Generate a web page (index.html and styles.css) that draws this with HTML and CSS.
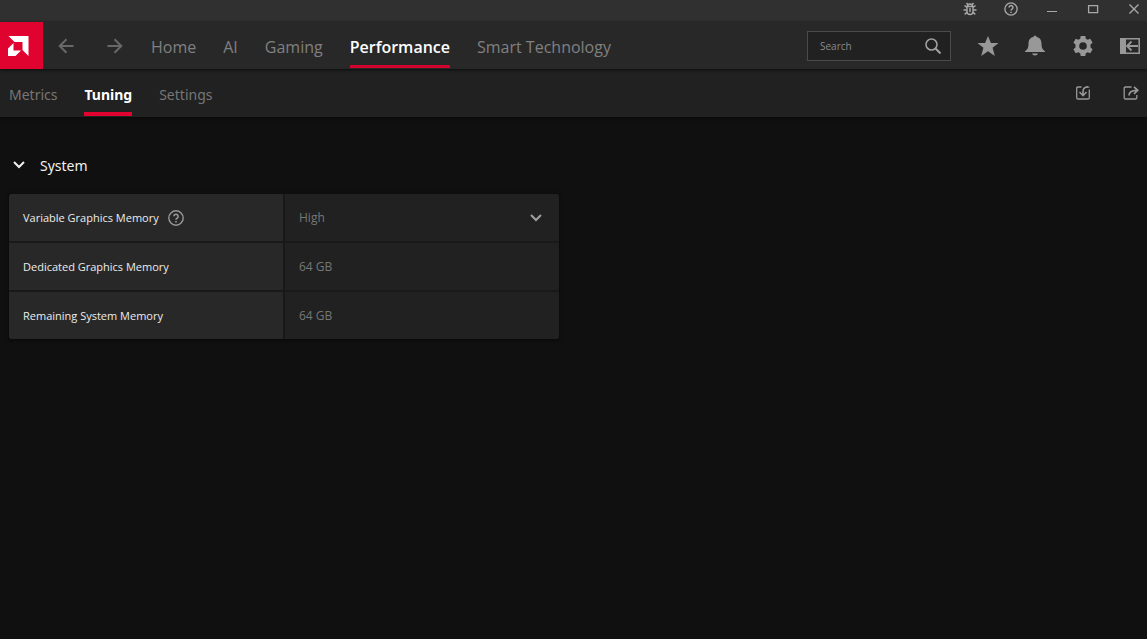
FILE: index.html
```html
<!DOCTYPE html>
<html lang="en">
<head>
<meta charset="utf-8">
<title>Performance Tuning</title>
<meta name="viewport" content="width=device-width, initial-scale=1">
<link rel="stylesheet" href="styles.css">
</head>
<body>
<div class="titlebar">
  <button class="icon-btn" aria-label="Report a bug"><svg width="14" height="14" viewBox="0 0 14 14" fill="none" stroke="currentColor" stroke-width="1.400"><path d="M4 4.500h6v5a3 3 0 0 1-6 0zM4.500 4.500a2.500 2.500 0 0 1 5 0M4.700 2.500 3.500 1M9.300 2.500 10.500 1M4 5.500 1.500 3.500M10 5.500l2.500-2M4 8H.5M10 8h3.500M4 10l-2.300 2.500M10 10l2.300 2.500M7 6v4"/></svg></button>
  <button class="icon-btn" aria-label="Help"><svg width="14" height="14" viewBox="0 0 16 16" fill="none" stroke="currentColor" stroke-width="1.500"><circle cx="8" cy="8" r="7"/><path d="M5.800 6.300a2.200 2.200 0 1 1 3.400 1.800Q8 8.900 8 9.800M8 11v1.600" stroke-width="1.700"/></svg></button>
  <button class="icon-btn" aria-label="Minimize"><svg width="14" height="14" viewBox="0 0 14 14" fill="none" stroke="currentColor"><path d="M2 9.500h10"/></svg></button>
  <button class="icon-btn" aria-label="Maximize"><svg width="14" height="14" viewBox="0 0 14 14" fill="none" stroke="currentColor" stroke-width="1.300"><path d="M2.600 3.600h9v7h-9z"/></svg></button>
  <button class="icon-btn" aria-label="Close"><svg width="14" height="14" viewBox="0 0 14 14" fill="none" stroke="currentColor" stroke-width="1.400"><path d="m2.500 2.500 9 9m0-9-9 9"/></svg></button>
</div>
<header class="mainbar">
  <a class="logo" href="#" aria-label="AMD"><svg width="22" height="22" viewBox="0 0 22 22" fill="#fff"><path d="M1.500 1h20v20l-6-6V7h-8zM6.500 8v7.500h7.500L8.500 21H1v-7.500z"/></svg></a>
  <div class="history">
    <button class="icon-btn" aria-label="Back"><svg width="16" height="16" viewBox="0 0 16 16" fill="none" stroke="currentColor" stroke-width="2"><path d="M15.500 8H2M8.500 1.200 1.700 8l6.800 6.800"/></svg></button>
    <button class="icon-btn" aria-label="Forward"><svg width="16" height="16" viewBox="0 0 16 16" fill="none" stroke="currentColor" stroke-width="2"><path d="M.5 8H14M7.500 1.200 14.300 8l-6.800 6.800"/></svg></button>
  </div>
  <nav class="tabs" aria-label="Main">
    <a class="tab" href="#">Home</a>
    <a class="tab" href="#">AI</a>
    <a class="tab" href="#">Gaming</a>
    <a class="tab active" href="#" aria-current="page">Performance</a>
    <a class="tab" href="#">Smart Technology</a>
  </nav>
  <label class="search">
    <input type="search" placeholder="Search" aria-label="Search">
    <svg width="16" height="16" viewBox="0 0 16 16" fill="none" stroke="currentColor" stroke-width="1.600"><circle cx="6.500" cy="6.500" r="5.500"/><path d="m10.500 10.500 5 5" stroke-width="2"/></svg>
  </label>
  <div class="tools">
    <button class="icon-btn" aria-label="Favorites"><svg width="22" height="22" viewBox="0 0 22 22" fill="currentColor"><path d="m11 1 2.900 7H21.500l-5.900 4.800L17.800 21 11 16.300 4.200 21l2.200-8.200L.5 8h7.600z"/></svg></button>
    <button class="icon-btn" aria-label="Notifications"><svg width="22" height="22" viewBox="0 0 22 22" fill="currentColor"><path d="M9.500 2a1.500 1.500 0 0 1 3 0c3.500.7 5 3.300 5 6.500 0 4 .8 5.800 3.500 7.700v.8H1v-.8c2.700-1.900 3.500-3.700 3.500-7.700 0-3.200 1.500-5.800 5-6.500zM8 18.500h6c-.5 1.300-1.500 2-3 2s-2.500-.7-3-2z"/></svg></button>
    <button class="icon-btn" aria-label="Settings"><svg width="24" height="24" viewBox="0 0 24 24" fill="currentColor"><path fill-rule="evenodd" d="m9.700 2-.5 2.700-1.900 1.100-2.600-1L2.400 8.700l2.100 1.800v3l-2.100 1.800 2.300 3.900 2.600-1 1.900 1.100.5 2.700h4.600l.5-2.700 1.900-1.100 2.600 1 2.300-3.900-2.100-1.800v-3l2.100-1.800-2.300-3.900-2.600 1-1.900-1.100-.5-2.700zM12 8.200a3.800 3.800 0 1 1 0 7.600 3.800 3.800 0 0 1 0-7.600z"/></svg></button>
    <button class="icon-btn" aria-label="Dock window"><svg width="20" height="16" viewBox="0 0 20 16" fill="none" stroke="currentColor" stroke-width="1.500"><path d="M.8.800h18.400v14.400H.8z"/><path d="M0 0h6v16H0z" fill="currentColor" stroke="none"/><path d="M18 8H7.500M11.500 3.500 7 8l4.500 4.500" stroke-width="1.800"/></svg></button>
  </div>
</header>
<div class="subbar">
  <nav class="subtabs" aria-label="Performance">
    <a class="subtab" href="#">Metrics</a>
    <a class="subtab active" href="#" aria-current="page">Tuning</a>
    <a class="subtab" href="#">Settings</a>
  </nav>
  <div class="tools">
    <button class="icon-btn" aria-label="Import profile"><svg width="16" height="16" viewBox="0 0 16 16" fill="none" stroke="currentColor" stroke-width="1.300"><path d="M6.500 2H3Q1.700 2 1.700 3.300v9.400Q1.700 14 3 14h10q1.300 0 1.300-1.300V4.500M11 2.200h3.300"/><path d="M13 1.700Q8 2 8 6.500V10M4.500 7 8 10.500 11.500 7" stroke-width="1.600"/></svg></button>
    <button class="icon-btn" aria-label="Export profile"><svg width="16" height="16" viewBox="0 0 16 16" fill="none" stroke="currentColor" stroke-width="1.300"><path d="M8.500 2H2.500Q1.200 2 1.200 3.300v9.400Q1.200 14 2.500 14h10q1.300 0 1.300-1.300V10"/><path d="M6 10.500Q6 5.300 14 5.300M11 1.800l3.800 3.500L11 8.800" stroke-width="1.700"/></svg></button>
  </div>
</div>
<main class="content">
  <button class="section-head" aria-expanded="true">
    <svg width="12" height="8" viewBox="0 0 12 8" fill="none" stroke="currentColor" stroke-width="2"><path d="m1 1 5 5 5-5"/></svg>
    <span>System</span>
  </button>
  <div class="settings">
    <div class="name"><label for="vgm">Variable Graphics Memory</label>
      <button class="icon-btn" aria-label="About Variable Graphics Memory"><svg width="16" height="16" viewBox="0 0 16 16" fill="none" stroke="currentColor" stroke-width="1.400"><circle cx="8" cy="8" r="7.200"/><path d="M5.900 6.300a2.100 2.100 0 1 1 3.300 1.800Q8 8.900 8 9.800M8 11v1.600" stroke-width="1.600"/></svg></button>
    </div>
    <div class="value choice">
      <select id="vgm"><option>High</option></select>
      <svg width="12" height="8" viewBox="0 0 12 8" fill="none" stroke="currentColor" stroke-width="2"><path d="m1 1 5 5 5-5"/></svg>
    </div>
    <div class="name">Dedicated Graphics Memory</div>
    <div class="value">64 GB</div>
    <div class="name">Remaining System Memory</div>
    <div class="value">64 GB</div>
  </div>
</main>
</body>
</html>
```
FILE: styles.css
```css
* { box-sizing: border-box; }
body {
  margin: 0;
  min-height: 100vh;
  background: #101010;
  color: #8a8a8a;
  font-family: "Open Sans", "Noto Sans", sans-serif;
  font-size: 12px;
}
button, input, select { font: inherit; color: inherit; background: none; border: 0; padding: 0; margin: 0; }
a { color: inherit; text-decoration: none; }
svg { display: block; flex: none; }
.icon-btn { display: flex; }
.titlebar {
  display: flex;
  justify-content: flex-end;
  gap: 27px;
  height: 22px;
  padding: 2px 6px 0 0;
  background: #303030;
  color: #a8a8a8;
}
.mainbar {
  position: relative;
  display: flex;
  align-items: center;
  height: 47px;
  background: #282828;
  box-shadow: 0 1px 3px #0c0c0c;
}
.logo {
  display: flex;
  align-items: center;
  align-self: stretch;
  width: 43px;
  padding-left: 7px;
  background: #e0032f;
}
.history { display: flex; gap: 33px; padding-left: 15px; color: #686868; }
.tabs { display: flex; align-self: stretch; gap: 27px; margin: 0 0 1px 28px; }
.tab {
  display: flex;
  align-items: center;
  padding-top: 7px;
  border-bottom: 3px solid transparent;
  color: #808080;
  font-size: 16px;
  white-space: nowrap;
}
.active { border-color: #d2042d; color: #fff; font-weight: 600; }
.search {
  display: flex;
  align-items: center;
  width: 144px;
  height: 30px;
  margin-left: auto;
  padding: 0 9px 0 12px;
  border: 1px solid #4b4b4b;
  background: #212121;
  color: #a0a0a0;
}
.search input { flex: 1; min-width: 0; outline: 0; font-size: 10px; }
.search input::placeholder { color: #8a8a8a; opacity: 1; }
.tools { display: flex; align-items: center; color: #989898; }
.mainbar .tools { gap: 25px; padding: 0 7px 0 26px; }
.subbar {
  display: flex;
  align-items: center;
  justify-content: space-between;
  height: 48px;
  padding: 0 8px 0 9px;
  background: #212121;
  box-shadow: 0 1px 3px #080808;
}
.subtabs { display: flex; align-self: stretch; gap: 27px; }
.subtab, .section-head { font-family: "Noto Sans", "Open Sans", sans-serif; font-size: 14px; }
.subtab {
  display: flex;
  align-items: center;
  padding-top: 7px;
  margin-bottom: 1px;
  border-bottom: 4px solid transparent;
  color: #767676;
}
.subtab.active { border-color: #e0032f; color: #fff; font-weight: 700; }
.subbar .tools { gap: 32px; }
.content { padding: 36px 9px; }
.section-head {
  display: flex;
  align-items: center;
  gap: 15px;
  height: 24px;
  padding-left: 4px;
  color: #f0f0f0;
}
.settings {
  display: grid;
  grid-template-columns: 1fr 1fr;
  grid-auto-rows: 47px;
  gap: 2px;
  max-width: 550px;
  margin-top: 17px;
  border-radius: 3px;
  overflow: hidden;
  background: #191919;
  box-shadow: 0 1px 4px #080808;
}
.name, .value { display: flex; align-items: center; padding: 0 14px; }
.name { gap: 9px; background: #282828; color: #ececec; font-size: 11px; }
.name .icon-btn { color: #989898; }
.value { background: #212121; color: #767676; }
.choice { padding-right: 17px; }
.choice select { flex: 1; appearance: none; }
.choice svg { color: #a0a0a0; }
```
